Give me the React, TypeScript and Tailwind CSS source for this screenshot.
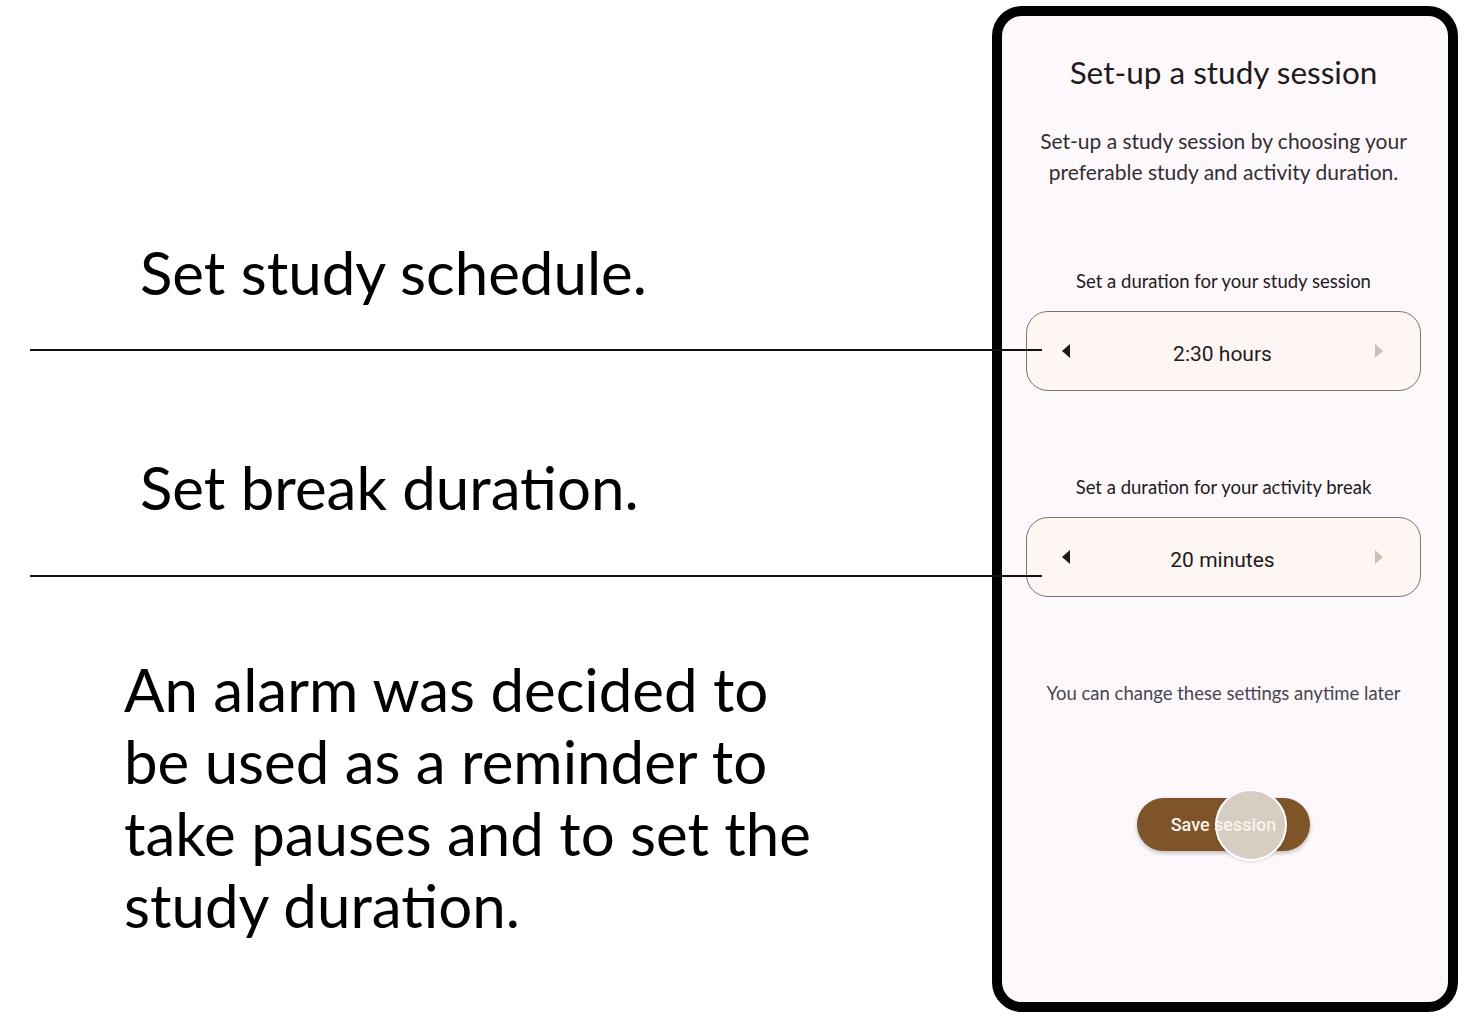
const lato = { fontFamily: 'Lato, "Noto Sans", sans-serif' }

function Stepper({ value }: { value: string }) {
  return (
    <div className="w-[395px] h-[80px] rounded-[22px] border-[1.5px] border-[#7a7470] bg-[#fdf6f2] flex items-center justify-between pl-[34px] pr-[36px] pt-[8px]">
      <svg width="10" height="16" viewBox="0 0 10 16" className="-mt-[8px]">
        <path d="M9 1 L1 8 L9 15 Z" fill="#1d1b1a" />
      </svg>
      <span className="text-[21px] text-[#1d1b20] font-['Roboto',sans-serif]">{value}</span>
      <svg width="10" height="16" viewBox="0 0 10 16" className="-mt-[8px]">
        <path d="M1 1 L9 8 L1 15 Z" fill="#cbc0b6" />
      </svg>
    </div>
  )
}

export default function App() {
  return (
    <div className="relative w-[1466px] h-[1020px] bg-white overflow-hidden" style={lato}>
      <div className="flex h-full">
        {/* Annotations */}
        <div className="w-[992px] flex flex-col text-black text-[60px] leading-[72px] pt-[236px]">
          <p className="pl-[140px]">Set study schedule.</p>
          <p className="pl-[140px] mt-[143px]">Set break duration.</p>
          <p className="pl-[124px] mt-[130px]">
            An alarm was decided to
            <br />
            be used as a reminder to
            <br />
            take pauses and to set the
            <br />
            study duration.
          </p>
        </div>

        {/* Phone */}
        <div className="mt-[6px] w-[466px] h-[1006px] rounded-[30px] border-[10px] border-black bg-[#fdf8fc] flex flex-col items-center pt-[37px] pr-[3px]">
          <h1 className="text-[31.5px] leading-[38px] text-[#1d1b20]">Set-up a study session</h1>
          <p className="mt-[34px] text-[21px] leading-[31px] text-[#322f35] text-center">
            Set-up a study session by choosing your
            <br />
            preferable study and activity duration.
          </p>

          <p className="mt-[82px] text-[18.5px] leading-[24px] text-[#1d1b20]">Set a duration for your study session</p>
          <div className="mt-[18px]">
            <Stepper value="2:30 hours" />
          </div>

          <p className="mt-[84px] text-[18.5px] leading-[24px] text-[#1d1b20]">Set a duration for your activity break</p>
          <div className="mt-[18px]">
            <Stepper value="20 minutes" />
          </div>

          <p className="mt-[84px] text-[18.5px] leading-[24px] text-[#49454f]">You can change these settings anytime later</p>

          <button className="relative mt-[93px] w-[173px] h-[53px] rounded-full bg-[#7f5428] shadow-[0_2px_4px_rgba(0,0,0,0.25)] flex items-center justify-center">
            <span className="absolute left-[78px] top-[-9px] w-[72px] h-[72px] rounded-full bg-[#d7cdc3] border-2 border-white shadow-[0_1px_3px_rgba(0,0,0,0.15)]" />
            <span className="relative text-[18px] font-medium text-[#fbf3ec] font-['Roboto',sans-serif]">Save session</span>
          </button>
        </div>
      </div>

      {/* Connector lines */}
      <div className="absolute left-[30px] top-[349px] w-[1012px] h-[2px] bg-[#111]" />
      <div className="absolute left-[30px] top-[575px] w-[1012px] h-[2px] bg-[#111]" />
    </div>
  )
}
